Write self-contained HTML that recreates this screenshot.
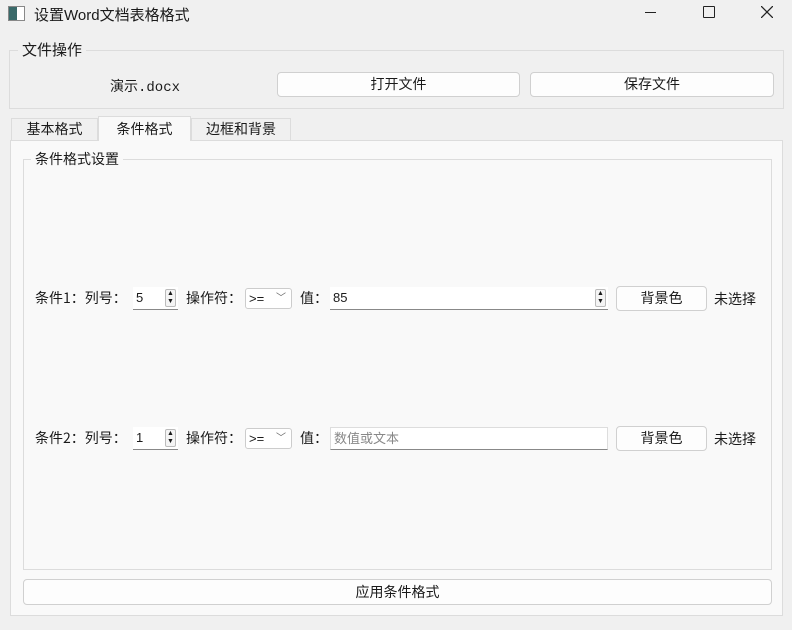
<!DOCTYPE html><html><head><meta charset="utf-8"><style>
*{box-sizing:border-box}body{margin:0;width:792px;height:630px;background:#f0f0f0;font-family:"Liberation Sans","Noto Sans CJK SC",sans-serif;font-size:14px;color:#1a1a1a;position:relative;overflow:hidden}
.a{position:absolute;white-space:nowrap}
.cj{font-family:"Noto Sans CJK SC",sans-serif;line-height:18px}
.btn{position:absolute;background:#fdfdfd;border:1px solid #d0d0d0;border-radius:4px;text-align:center;line-height:22px}
.grp{position:absolute;border:1px solid #dcdcdc}
.lbl{position:absolute;padding:0 4px;line-height:18px}
.spin{position:absolute;background:#fff;border-bottom:1px solid #888;height:23px;line-height:22px;padding-left:3px;font-size:13px}
.arr{position:absolute;right:2px;top:2px;width:11px;height:18px;border:1px solid #bbb;border-radius:2px;background:#f4f4f4;font-size:7px;line-height:8px;text-align:center}
.combo{position:absolute;background:#fff;border:1px solid #ccc;border-radius:3px;height:21px;line-height:19px;padding-left:3px;font-size:13px}
</style></head><body>
<div class="a" style="left:8px;top:6px;width:17px;height:15px;border:1px solid #888;background:linear-gradient(90deg,#3a6a6a 0 55%,#fff 55%)"></div>
<div class="a" style="left:34px;top:4px;font-size:15px">设置Word文档表格格式</div>
<div class="a" style="left:645px;top:12px;width:11px;height:1px;background:#222"></div>
<div class="a" style="left:703px;top:6px;width:12px;height:12px;border:1px solid #222;border-radius:1px"></div>
<svg class="a" style="left:761px;top:6px" width="12" height="12"><path d="M0 0L12 12M12 0L0 12" stroke="#222" stroke-width="1.3"/></svg>
<div class="grp" style="left:9px;top:50px;width:775px;height:59px"></div>
<div class="lbl cj" style="left:18px;top:41px;background:#f0f0f0;font-size:15px">文件操作</div>
<div class="a" style="left:110px;top:76px;font-family:'Liberation Mono','Noto Sans CJK SC',monospace">演示.docx</div>
<div class="btn" style="left:277px;top:72px;width:243px;height:25px">打开文件</div>
<div class="btn" style="left:530px;top:72px;width:244px;height:25px">保存文件</div>
<div class="a" style="left:10px;top:140px;width:773px;height:476px;background:#f9f9f9;border:1px solid #dcdcdc"></div>
<div class="a" style="left:11px;top:118px;width:87px;height:22px;border:1px solid #dcdcdc;border-bottom:none;text-align:center;line-height:21px">基本格式</div>
<div class="a" style="left:98px;top:116px;width:93px;height:25px;border:1px solid #dcdcdc;border-bottom:none;background:#f9f9f9;text-align:center;line-height:24px">条件格式</div>
<div class="a" style="left:191px;top:118px;width:100px;height:22px;border:1px solid #dcdcdc;border-bottom:none;text-align:center;line-height:21px">边框和背景</div>
<div class="grp" style="left:23px;top:159px;width:749px;height:411px"></div>
<div class="lbl" style="left:31px;top:150px;background:#f9f9f9">条件格式设置</div>

<div class="a cj" style="left:35px;top:289px">条件1：列号：</div>
<div class="spin" style="left:133px;top:287px;width:45px">5<div class="arr">▲<br>▼</div></div>
<div class="a cj" style="left:186px;top:289px">操作符：</div>
<div class="combo" style="left:245px;top:288px;width:47px">&gt;= <span style="position:absolute;right:5px;color:#666;font-size:10px">﹀</span></div>
<div class="a cj" style="left:300px;top:289px">值：</div>
<div class="spin" style="left:330px;top:287px;width:278px">85<div class="arr">▲<br>▼</div></div>
<div class="btn" style="left:616px;top:286px;width:91px;height:25px">背景色</div>
<div class="a" style="left:714px;top:289px">未选择</div>

<div class="a cj" style="left:35px;top:429px">条件2：列号：</div>
<div class="spin" style="left:133px;top:427px;width:45px">1<div class="arr">▲<br>▼</div></div>
<div class="a cj" style="left:186px;top:429px">操作符：</div>
<div class="combo" style="left:245px;top:428px;width:47px">&gt;= <span style="position:absolute;right:5px;color:#666;font-size:10px">﹀</span></div>
<div class="a cj" style="left:300px;top:429px">值：</div>
<div class="spin" style="left:330px;top:427px;width:278px;color:#888;border:1px solid #ddd;border-bottom:1px solid #888">数值或文本</div>
<div class="btn" style="left:616px;top:426px;width:91px;height:25px">背景色</div>
<div class="a" style="left:714px;top:429px">未选择</div>

<div class="btn" style="left:23px;top:579px;width:749px;height:26px;line-height:24px">应用条件格式</div>
</body></html>
